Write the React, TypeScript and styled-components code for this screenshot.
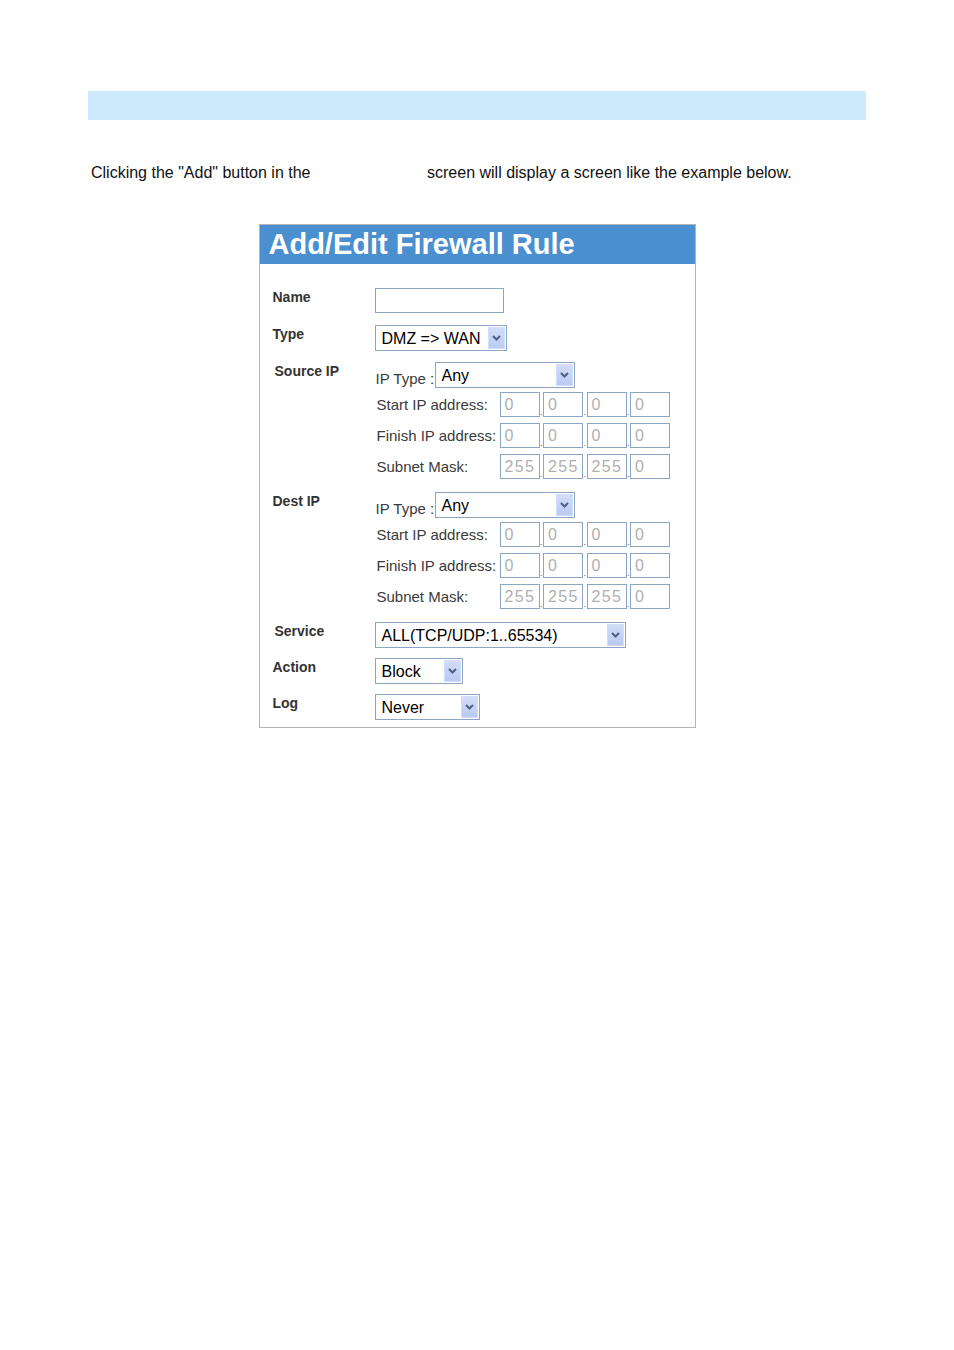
import styled, { createGlobalStyle } from "styled-components";

const GlobalStyle = createGlobalStyle`
  body {
    margin: 0;
    background: #ffffff;
    font-family: "Liberation Sans", Arial, sans-serif;
  }
`;

const Page = styled.div`
  width: 778px;
  margin: 0 auto;
  padding-top: 91px;
`;

const TopBand = styled.div`
  height: 29px;
  background: #cdeafd;
`;

const Intro = styled.p`
  margin: 44px 0 0 3px;
  font-size: 16px;
  line-height: 17px;
  color: #111;
`;

const IntroLead = styled.span`
  display: inline-block;
  width: 336px;
`;

const Panel = styled.div`
  width: 435px;
  margin: 43px auto 0;
  border: 1px solid #b4b4b4;
  background: #fff;
`;

const Header = styled.div`
  height: 39px;
  padding: 1px 0 0 9px;
  box-sizing: border-box;
  background: #4a8fcf;
  color: #fff;
  font-size: 29px;
  font-weight: bold;
  line-height: 36px;
`;

const Body = styled.div`
  display: flex;
  flex-direction: column;
  padding: 24px 0 7px 13px;
`;

const Row = styled.div<{ $top?: number }>`
  display: flex;
  align-items: flex-start;
  margin-top: ${({ $top }) => $top ?? 0}px;
`;

const Label = styled.div<{ $indent?: number }>`
  width: ${({ $indent }) => 102 - ($indent ?? 0)}px;
  padding: 1px 0 0 ${({ $indent }) => $indent ?? 0}px;
  font-size: 14px;
  line-height: 16px;
  font-weight: bold;
  color: #333;
`;

const TextInput = styled.div<{ $width: number }>`
  width: ${({ $width }) => $width}px;
  height: 25px;
  box-sizing: border-box;
  border: 1px solid #8aa6c4;
  background: #fff;
`;

const SelectBox = styled.div<{ $width: number }>`
  position: relative;
  width: ${({ $width }) => $width}px;
  height: 26px;
  box-sizing: border-box;
  border: 1px solid #8aa6c4;
  background: #fff;
  padding: 1px 0 0 6px;
  font-size: 16px;
  line-height: 24px;
  color: #000;
  white-space: nowrap;
`;

const ArrowButton = styled.span`
  position: absolute;
  top: 1px;
  right: 1px;
  width: 17px;
  height: 22px;
  box-sizing: border-box;
  border: 1px solid #d2defa;
  background: linear-gradient(#d1ddf8, #b9cbf1);
  display: flex;
  align-items: center;
  justify-content: center;
`;

const Select = ({ value, width }: { value: string; width: number }) => (
  <SelectBox $width={width}>
    {value}
    <ArrowButton>
      <svg width="9" height="6" viewBox="0 0 9 6">
        <path d="M1 1 L4.5 4.5 L8 1" fill="none" stroke="#4d5f86" strokeWidth="2" />
      </svg>
    </ArrowButton>
  </SelectBox>
);

const IpBlock = styled.div`
  display: flex;
  flex-direction: column;
  gap: 6px;
`;

const IpTypeRow = styled.div`
  display: flex;
  align-items: flex-end;
  margin-bottom: -2px;
`;

const FieldLabel = styled.span<{ $width: number }>`
  width: ${({ $width }) => $width}px;
  padding-left: 1px;
  font-size: 15px;
  line-height: 18px;
  color: #3a3a3a;
  white-space: nowrap;
`;

const IpRow = styled.div`
  display: flex;
  align-items: center;
  height: 25px;
  padding-left: 1px;
`;

const Octets = styled.div`
  display: flex;
  align-items: flex-end;
`;

const OctetBox = styled.div`
  width: 40px;
  height: 25px;
  box-sizing: border-box;
  border: 1px solid #8aa6c4;
  padding-left: 4px;
  font-size: 16px;
  letter-spacing: 1.4px;
  line-height: 23px;
  color: #b0b0b0;
`;

const Dot = styled.span`
  width: 3.5px;
  font-size: 9px;
  line-height: 9px;
  color: #555;
  text-align: center;
  overflow: visible;
`;

const IpAddress = ({ octets }: { octets: string[] }) => (
  <Octets>
    {octets.map((o, i) => (
      <>
        {i > 0 && <Dot key={`d${i}`}>.</Dot>}
        <OctetBox key={`o${i}`}>{o}</OctetBox>
      </>
    ))}
  </Octets>
);

const IpSection = () => (
  <IpBlock>
    <IpTypeRow>
      <FieldLabel $width={59}>IP Type :</FieldLabel>
      <Select value="Any" width={140} />
    </IpTypeRow>
    <IpRow>
      <FieldLabel $width={123}>Start IP address:</FieldLabel>
      <IpAddress octets={["0", "0", "0", "0"]} />
    </IpRow>
    <IpRow>
      <FieldLabel $width={123}>Finish IP address:</FieldLabel>
      <IpAddress octets={["0", "0", "0", "0"]} />
    </IpRow>
    <IpRow>
      <FieldLabel $width={123}>Subnet Mask:</FieldLabel>
      <IpAddress octets={["255", "255", "255", "0"]} />
    </IpRow>
  </IpBlock>
);

const App = () => (
  <>
    <GlobalStyle />
    <Page>
      <TopBand />
      <Intro>
        <IntroLead>Clicking the "Add" button in the</IntroLead>
        screen will display a screen like the example below.
      </Intro>
      <Panel>
        <Header>Add/Edit Firewall Rule</Header>
        <Body>
          <Row>
            <Label>Name</Label>
            <TextInput $width={129} />
          </Row>
          <Row $top={12}>
            <Label>Type</Label>
            <Select value="DMZ => WAN" width={132} />
          </Row>
          <Row $top={11}>
            <Label $indent={2}>Source IP</Label>
            <IpSection />
          </Row>
          <Row $top={13}>
            <Label>Dest IP</Label>
            <IpSection />
          </Row>
          <Row $top={13}>
            <Label $indent={2}>Service</Label>
            <Select value="ALL(TCP/UDP:1..65534)" width={251} />
          </Row>
          <Row $top={10}>
            <Label>Action</Label>
            <Select value="Block" width={88} />
          </Row>
          <Row $top={10}>
            <Label>Log</Label>
            <Select value="Never" width={105} />
          </Row>
        </Body>
      </Panel>
    </Page>
  </>
);

export default App;
